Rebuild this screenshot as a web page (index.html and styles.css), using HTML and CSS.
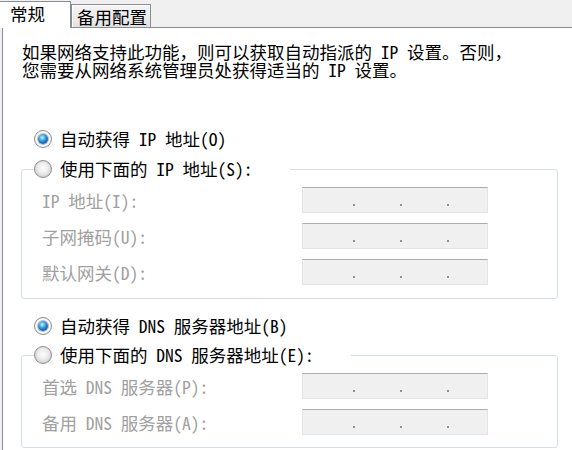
FILE: index.html
```html
<!DOCTYPE html>
<html lang="zh-CN">
<head>
<meta charset="utf-8">
<title>Internet 协议版本 4 属性</title>
<link rel="stylesheet" href="styles.css">
</head>
<body>
<div class="tabstrip">
  <div class="tab active">常规</div>
  <div class="tab inactive">备用配置</div>
</div>
<div class="panel">
  <div class="desc">
    <div class="desc-line">如果网络支持此功能，则可以获取自动指派的 IP 设置。否则，</div>
    <div class="desc-line">您需要从网络系统管理员处获得适当的 IP 设置。</div>
  </div>

  <div class="opt opt-first"><span class="radio checked"></span><span>自动获得 IP 地址(O)</span></div>
  <fieldset class="group">
    <legend class="opt legend-ip"><span class="radio"></span><span>使用下面的 IP 地址(S):</span></legend>
    <div class="field"><span>IP 地址(I):</span><span class="ipbox"><i></i><i></i><i></i></span></div>
    <div class="field"><span>子网掩码(U):</span><span class="ipbox"><i></i><i></i><i></i></span></div>
    <div class="field"><span>默认网关(D):</span><span class="ipbox"><i></i><i></i><i></i></span></div>
  </fieldset>

  <div class="opt opt-dns"><span class="radio checked"></span><span>自动获得 DNS 服务器地址(B)</span></div>
  <fieldset class="group group-dns">
    <legend class="opt legend-dns"><span class="radio"></span><span>使用下面的 DNS 服务器地址(E):</span></legend>
    <div class="field"><span>首选 DNS 服务器(P):</span><span class="ipbox"><i></i><i></i><i></i></span></div>
    <div class="field"><span>备用 DNS 服务器(A):</span><span class="ipbox"><i></i><i></i><i></i></span></div>
  </fieldset>
</div>
</body>
</html>
```
FILE: styles.css
```css
html, body {
  margin: 0;
  height: 450px;
  overflow: hidden;
}
body {
  background: #f0f0f0;
  font-family: "Noto Sans Mono CJK SC", "Noto Sans CJK SC", sans-serif;
  font-size: 17.5px;
  color: #000;
}

.tabstrip {
  display: flex;
  align-items: flex-end;
  height: 27px;
  background: #f0f0f0;
}
.tab {
  box-sizing: border-box;
  white-space: nowrap;
  line-height: 20px;
}
.tab.active {
  position: relative;
  z-index: 1;
  width: 71px;
  height: 27px;
  margin-bottom: -1px;
  padding: 2px 0 0 10px;
  background: #fff;
  border-top: 1px solid #898c95;
  border-right: 1px solid #898c95;
}
.tab.inactive {
  width: 80px;
  height: 23px;
  padding: 2px 0 0 5px;
  background: linear-gradient(#f4f4f4, #ebebeb 55%, #e2e2e2);
  border: 1px solid #898c95;
  border-bottom: none;
  box-shadow: inset 1px 1px 0 #fff;
}

.panel {
  margin-left: 2px;
  height: 430px;
  background: #fff;
  border-top: 1px solid #898c95;
  border-left: 1px solid #898c95;
}

.desc {
  padding: 15px 0 0 19px;
  height: 37px;
}
.desc-line {
  height: 17.5px;
  line-height: 17.5px;
  white-space: nowrap;
}

.opt {
  display: flex;
  align-items: center;
  gap: 8px;
  height: 20px;
  line-height: 20px;
  white-space: nowrap;
}
.opt-first { margin: 49px 0 0 31px; }
.opt-dns { margin: 17px 0 0 31px; }

.radio {
  flex: none;
  position: relative;
  box-sizing: border-box;
  width: 18px;
  height: 18px;
  border-radius: 50%;
  border: 1px solid #8e8f8f;
  background: radial-gradient(circle at 50% 45%, #fdfdfd 0, #eeeeee 40%, #d4d4d4 72%, #f2f2f2 92%);
}
.radio.checked {
  background: radial-gradient(circle at 50% 50%, #ffffff 55%, #e4e4e4 85%, #f6f6f6 100%);
}
.radio.checked::after {
  content: "";
  position: absolute;
  inset: 3px;
  border-radius: 50%;
  background: radial-gradient(circle at 42% 35%, #d2f3ff 0, #52b8ea 28%, #1c72bb 58%, #0c3f7a 100%);
  box-shadow: 0 0 0 1px rgba(30, 60, 100, 0.35);
}

.group {
  box-sizing: border-box;
  width: 537px;
  margin: 10px 0 0 18px;
  padding: 8px 0 13px;
  border: 1px solid #d5dfe5;
  border-radius: 3px;
  min-width: 0;
}
.group-dns {
  margin-top: 9px;
  padding-bottom: 12px;
}
.group legend {
  margin-left: 12px;
  padding: 0;
  box-sizing: border-box;
}
.legend-ip { width: 256px; }
.legend-dns { width: 317px; }

.field {
  display: grid;
  grid-template-columns: 260px 186px;
  align-items: center;
  height: 26px;
  padding-left: 20px;
  color: #a0a0a0;
  white-space: nowrap;
}
.field + .field { margin-top: 10px; }

.ipbox {
  box-sizing: border-box;
  display: flex;
  align-items: flex-end;
  gap: 45px;
  width: 186px;
  height: 26px;
  padding: 0 0 6px 50px;
  background: #f0f0f0;
  border: 1px solid #e3e4e8;
  border-top-color: #adadad;
}
.ipbox i {
  width: 2px;
  height: 2px;
  background: #a08c78;
}
```
